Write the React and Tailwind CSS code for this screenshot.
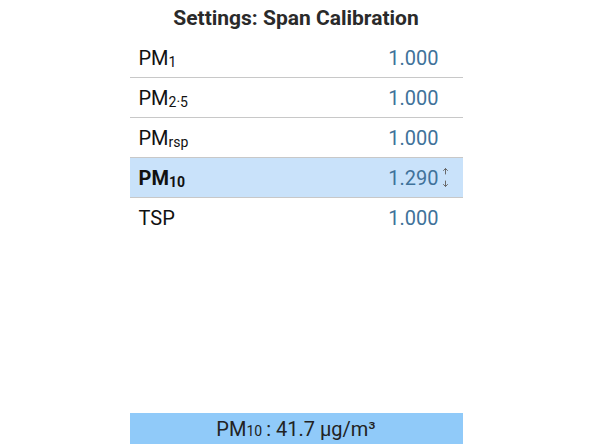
import React from "react";

const rows = [
  { label: "PM", sub: "1", value: "1.000" },
  { label: "PM", sub: "2·5", value: "1.000" },
  { label: "PM", sub: "rsp", value: "1.000" },
  { label: "PM", sub: "10", value: "1.290", active: true },
  { label: "TSP", sub: "", value: "1.000", last: true },
];

const SpinArrows = () => (
  <svg width="7" height="21" viewBox="0 0 7 21" fill="none" stroke="#6a6a6a" strokeWidth="1" strokeLinecap="round">
    <path d="M3.5 1.5 V7" />
    <path d="M1.5 3.5 L3.5 1.5 L5.5 3.5" />
    <path d="M3.5 14 V19.5" />
    <path d="M1.5 17.5 L3.5 19.5 L5.5 17.5" />
  </svg>
);

export default function App() {
  return (
    <div
      className="w-[592px] h-[444px] bg-white flex flex-col overflow-hidden"
      style={{ fontFamily: "Roboto, 'Liberation Sans', sans-serif" }}
    >
      <div className="w-[333px] mx-auto flex flex-col flex-1">
        <div className="h-[38px] flex items-center justify-center text-[21px] font-bold text-[#2a2a2a]">
          Settings: Span Calibration
        </div>
        {rows.map((r, i) => (
          <div
            key={i}
            className={
              "h-[40px] flex items-center pl-[9px] text-[20px] " +
              (r.last ? "" : "border-b border-[#c8c8c8] ") +
              (r.active ? "bg-[#c9e2fa]" : "")
            }
          >
            <span className={"text-[#111] " + (r.active ? "font-bold" : "")}>
              {r.label}
              {r.sub && <sub className="text-[14px] bottom-[-0.2em]">{r.sub}</sub>}
            </span>
            <span className="ml-auto text-[#40729a]">{r.value}</span>
            <span className="w-[24px] flex items-center pl-[3px]">
              {r.active && <SpinArrows />}
            </span>
          </div>
        ))}
        <div className="mt-auto h-[31px] bg-[#90caf9] flex items-center justify-center text-[20px] text-[#222]">
          PM<sub className="text-[14px] bottom-[-0.2em]">10</sub>
          <span className="ml-[4px]">: 41.7 µg/m³</span>
        </div>
      </div>
    </div>
  );
}
